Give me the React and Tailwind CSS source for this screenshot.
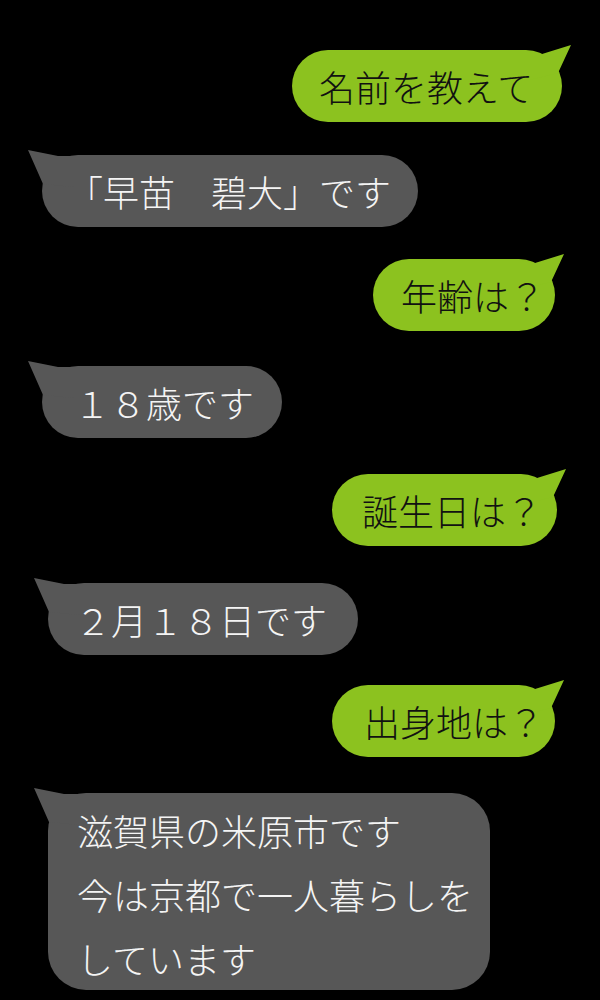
import React from 'react';

const GREEN = '#8cc21f';
const GRAY = '#575757';

const messages = [
    { me: true, text: '名前を教えて', w: 'w-[270px]', pl: 'pl-[27px]', side: 'mr-[38px]', mt: 'mt-[50px]' },
    { me: false, text: '「早苗　碧大」です', w: 'w-[376px]', pl: 'pl-[25px]', side: 'ml-[42px]', mt: 'mt-[33px]' },
    { me: true, text: '年齢は？', w: 'w-[182px]', pl: 'pl-[28px]', side: 'mr-[45px]', mt: 'mt-[32px]' },
    { me: false, text: '１８歳です', w: 'w-[240px]', pl: 'pl-[32px]', side: 'ml-[42px]', mt: 'mt-[35px]' },
    { me: true, text: '誕生日は？', w: 'w-[225px]', pl: 'pl-[30px]', side: 'mr-[43px]', mt: 'mt-[36px]' },
    { me: false, text: '２月１８日です', w: 'w-[310px]', pl: 'pl-[27px]', side: 'ml-[48px]', mt: 'mt-[37px]' },
    { me: true, text: '出身地は？', w: 'w-[223px]', pl: 'pl-[32px]', side: 'mr-[45px]', mt: 'mt-[30px]' },
];

// little speech tail, drawn over the bubble corner
const Tail = ({ me }) =>
    me ? (
        <svg className="absolute right-0 top-0 overflow-visible" width="1" height="1">
            <polygon points="10,-5 -19,4 -32,2 -32,30 -3,23" fill={GREEN} />
        </svg>
    ) : (
        <svg className="absolute left-0 top-0 overflow-visible" width="1" height="1">
            <polygon points="-14,-5 16,1 32,1 32,32 1,29" fill={GRAY} />
        </svg>
    );

const Bubble = ({ me, children, className = '' }) => (
    <div
        className={`relative text-[36px] leading-[64px] font-light ${
            me ? 'bg-[#8cc21f] text-[#111111]' : 'bg-[#575757] text-[#f4f4f4]'
        } ${className}`}
    >
        <Tail me={me} />
        <div className="relative">{children}</div>
    </div>
);

export default function App() {
    return (
        <div
            className="w-[600px] h-[1000px] bg-black flex flex-col overflow-hidden"
            style={{ fontFamily: '"Noto Sans CJK JP", "Noto Sans", sans-serif' }}
        >
            {messages.map((m, i) => (
                <div key={i} className={`flex ${m.me ? 'justify-end' : 'justify-start'} ${m.mt}`}>
                    <Bubble
                        me={m.me}
                        className={`${m.w} ${m.pl} ${m.side} h-[72px] shrink-0 rounded-full flex items-center whitespace-nowrap`}
                    >
                        {m.text}
                    </Bubble>
                </div>
            ))}
            <div className="flex justify-start mt-[36px]">
                <Bubble me={false} className="w-[442px] h-[197px] shrink-0 ml-[48px] pl-[29px] pt-[5px] rounded-[38px]">
                    <div>滋賀県の米原市です</div>
                    <div>今は京都で一人暮らしを</div>
                    <div>しています</div>
                </Bubble>
            </div>
        </div>
    );
}
